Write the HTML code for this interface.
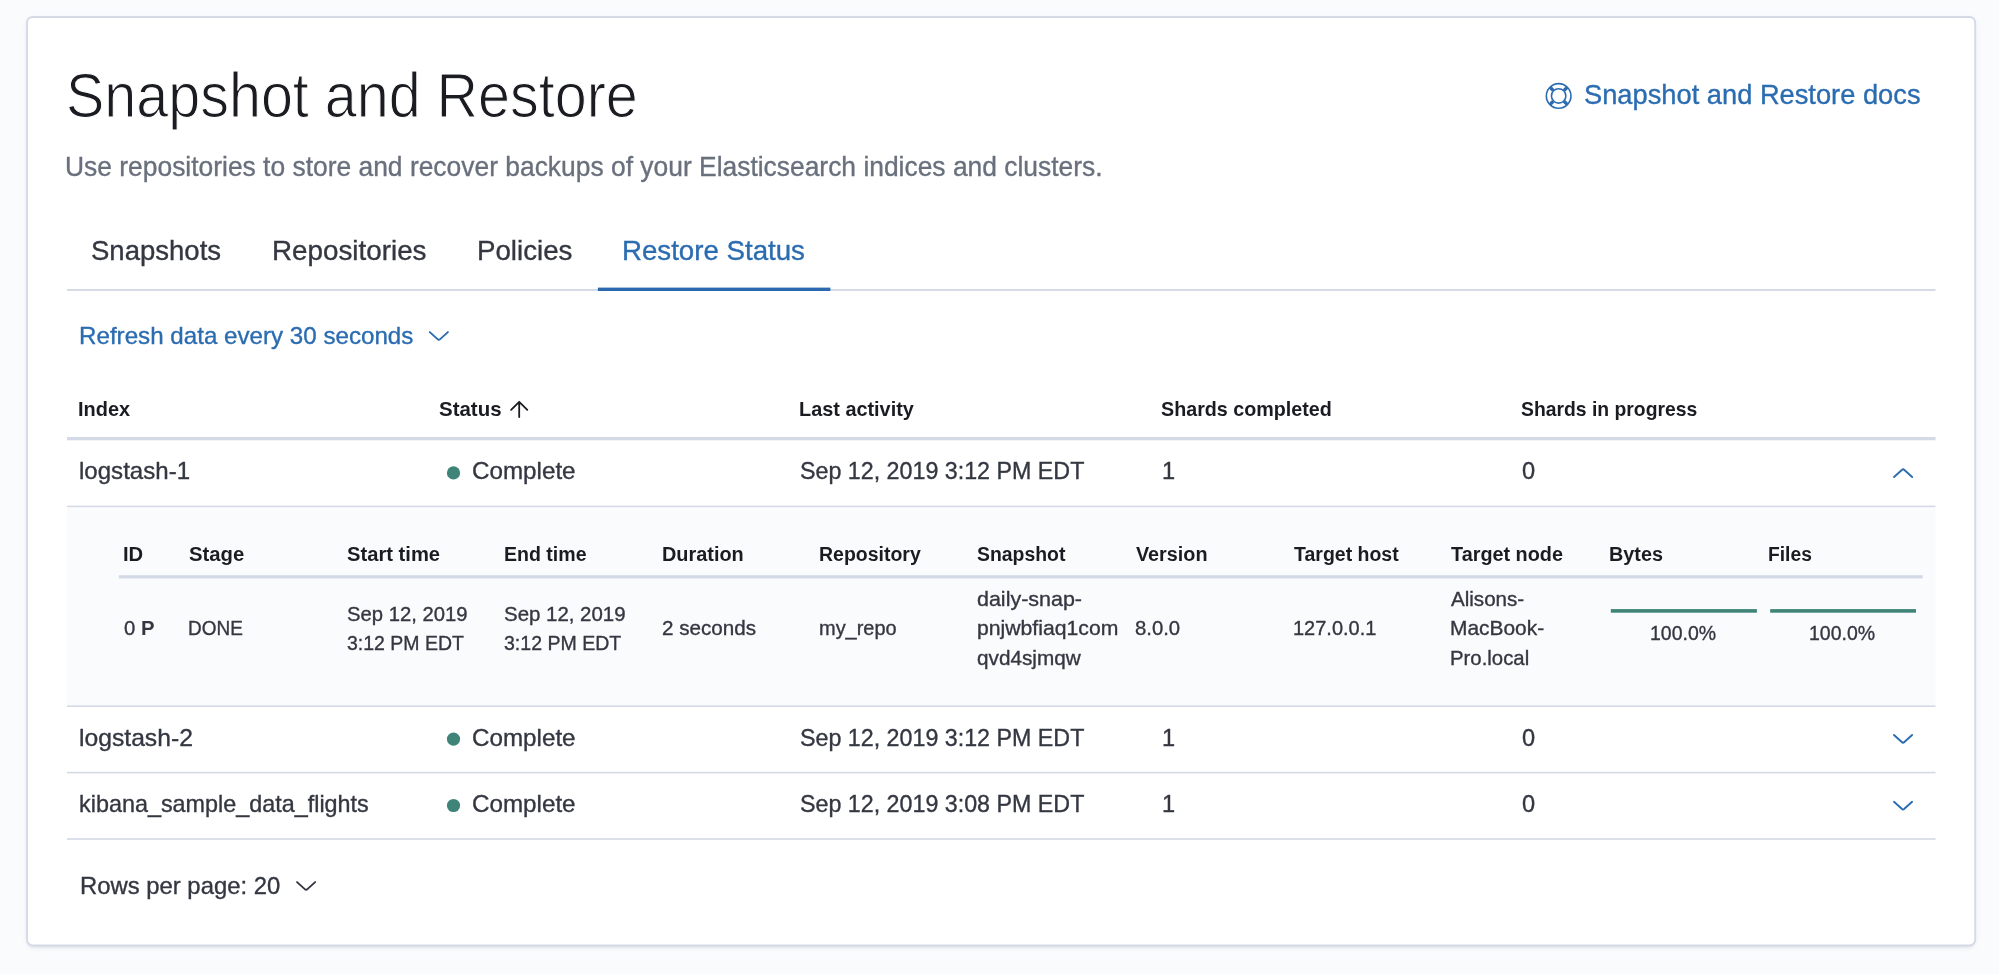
<!DOCTYPE html>
<html lang="en"><head><meta charset="utf-8"><title>Snapshot and Restore</title>
<style>
*{margin:0;padding:0;box-sizing:border-box}
html,body{width:1999px;height:974px;overflow:hidden;background:#fafbfd}
body{font-family:"Liberation Sans",sans-serif;position:relative;-webkit-font-smoothing:antialiased}
.panel{position:absolute;left:27px;top:17px;width:1948px;height:928px;background:#fff;border-radius:6px;box-shadow:0 3.2px 3.2px -1.6px rgba(152,162,179,.3),0 1.6px 8px -3.2px rgba(152,162,179,.3)}
.t{position:absolute;white-space:pre;line-height:1;transform-origin:0 0}
.layer{position:absolute;left:0;top:0;width:1999px;height:974px;will-change:transform;transform:translateZ(0)}
svg{position:absolute;overflow:visible}
.title{font-size:63.0px;font-weight:400;color:#1a1c21;-webkit-text-stroke:1.1px #fff;paint-order:fill stroke}
.sub{font-size:27.2px;font-weight:400;color:#69707d;-webkit-text-stroke:0.35px #69707d}
.tab{font-size:27.2px;font-weight:400;color:#343741;-webkit-text-stroke:0.35px #343741}
.tabsel{font-size:27.2px;font-weight:400;color:#2b6cb1;-webkit-text-stroke:0.35px #2b6cb1}
.docs{font-size:27.2px;font-weight:400;color:#2b6cb1;-webkit-text-stroke:0.35px #2b6cb1}
.btn{font-size:23.6px;font-weight:400;color:#2b6cb1;-webkit-text-stroke:0.35px #2b6cb1}
.th{font-size:19.9px;font-weight:700;color:#1a1c21}
.td{font-size:23.6px;font-weight:400;color:#343741;-webkit-text-stroke:0.35px #343741}
.ith{font-size:20.0px;font-weight:700;color:#1a1c21}
.itd{font-size:20.3px;font-weight:400;color:#343741;-webkit-text-stroke:0.35px #343741}
.itdb{font-size:20.3px;font-weight:700;color:#343741}
.rows{font-size:23.6px;font-weight:400;color:#343741;-webkit-text-stroke:0.35px #343741}
</style></head>
<body>
<div class="panel"></div>
<div class="layer">
<svg width="1999" height="974" style="left:0;top:0" viewBox="0 0 1999 974">
<rect x="27" y="16.95" width="1948.2" height="928.4" rx="5.6" fill="#fff" stroke="#d3dae6" stroke-width="1.85"/>
<rect x="67" y="507.8" width="1868.5" height="197.6" fill="#fafbfd"/>
<rect x="67" y="289.0" width="1868.5" height="1.9" fill="#d3dae6"/>
<rect x="597.9" y="287.6" width="232.5" height="3.4" fill="#2a69b0"/>
<rect x="67" y="437.0" width="1868.5" height="3.3" fill="#d3dae6"/>
<rect x="67" y="505.6" width="1868.5" height="1.6" fill="#d3dae6"/>
<rect x="67" y="705.4" width="1868.5" height="1.6" fill="#d3dae6"/>
<rect x="67" y="771.8" width="1868.5" height="1.6" fill="#d3dae6"/>
<rect x="67" y="838.2" width="1868.5" height="1.6" fill="#d3dae6"/>
<rect x="118.9" y="575.2" width="1803.8" height="3.2" fill="#d3dae6"/>
<rect x="1610.8" y="609.1" width="146.1" height="3.6" fill="#3f8478"/>
<rect x="1770.2" y="609.1" width="145.8" height="3.6" fill="#3f8478"/>
<circle cx="453.5" cy="472.9" r="6.6" fill="#3f8478"/>
<circle cx="453.5" cy="739.1" r="6.6" fill="#3f8478"/>
<circle cx="453.5" cy="805.5" r="6.6" fill="#3f8478"/>
</svg>
<span class="t title" id="title" style="left:66px;top:64px;transform:scaleX(0.9121)">Snapshot and Restore</span>
<span class="t sub" id="sub" style="left:65px;top:153px;transform:scaleX(0.9712)">Use repositories to store and recover backups of your Elasticsearch indices and clusters.</span>
<span class="t docs" id="docs" style="left:1584px;top:81px;transform:scaleX(1.0030)">Snapshot and Restore docs</span>
<span class="t tab" id="tab1" style="left:91px;top:237px;transform:scaleX(1.0121)">Snapshots</span>
<span class="t tab" id="tab2" style="left:272px;top:237px;transform:scaleX(1.0224)">Repositories</span>
<span class="t tab" id="tab3" style="left:477px;top:237px;transform:scaleX(1.0181)">Policies</span>
<span class="t tabsel" id="tab4" style="left:622px;top:237px;transform:scaleX(1.0171)">Restore Status</span>
<span class="t btn" id="refresh" style="left:79px;top:325px;transform:scaleX(1.0239)">Refresh data every 30 seconds</span>
<span class="t th" id="h1" style="left:78px;top:400px;transform:scaleX(1.0022)">Index</span>
<span class="t th" id="h2" style="left:439px;top:400px;transform:scaleX(1.0285)">Status</span>
<span class="t th" id="h3" style="left:799px;top:400px;transform:scaleX(0.9990)">Last activity</span>
<span class="t th" id="h4" style="left:1161px;top:400px;transform:scaleX(0.9909)">Shards completed</span>
<span class="t th" id="h5" style="left:1521px;top:400px;transform:scaleX(0.9726)">Shards in progress</span>
<span class="t td" id="r0a" style="left:79px;top:460px;transform:scaleX(1.0199)">logstash-1</span>
<span class="t td" id="r0b" style="left:472px;top:460px;transform:scaleX(1.0258)">Complete</span>
<span class="t td" id="r0c" style="left:800px;top:460px;transform:scaleX(0.9855)">Sep 12, 2019 3:12 PM EDT</span>
<span class="t td" id="r0d" style="left:1162px;top:460px;transform:scaleX(1.0000)">1</span>
<span class="t td" id="r0e" style="left:1522px;top:460px;transform:scaleX(1.0000)">0</span>
<span class="t td" id="r1a" style="left:79px;top:727px;transform:scaleX(1.0462)">logstash-2</span>
<span class="t td" id="r1b" style="left:472px;top:727px;transform:scaleX(1.0258)">Complete</span>
<span class="t td" id="r1c" style="left:800px;top:727px;transform:scaleX(0.9855)">Sep 12, 2019 3:12 PM EDT</span>
<span class="t td" id="r1d" style="left:1162px;top:727px;transform:scaleX(1.0000)">1</span>
<span class="t td" id="r1e" style="left:1522px;top:727px;transform:scaleX(1.0000)">0</span>
<span class="t td" id="r2a" style="left:79px;top:793px;transform:scaleX(0.9907)">kibana_sample_data_flights</span>
<span class="t td" id="r2b" style="left:472px;top:793px;transform:scaleX(1.0258)">Complete</span>
<span class="t td" id="r2c" style="left:800px;top:793px;transform:scaleX(0.9855)">Sep 12, 2019 3:08 PM EDT</span>
<span class="t td" id="r2d" style="left:1162px;top:793px;transform:scaleX(1.0000)">1</span>
<span class="t td" id="r2e" style="left:1522px;top:793px;transform:scaleX(1.0000)">0</span>
<span class="t ith" id="i1" style="left:123px;top:544px;transform:scaleX(1.0094)">ID</span>
<span class="t ith" id="i2" style="left:189px;top:544px;transform:scaleX(1.0137)">Stage</span>
<span class="t ith" id="i3" style="left:347px;top:544px;transform:scaleX(1.0088)">Start time</span>
<span class="t ith" id="i4" style="left:504px;top:544px;transform:scaleX(0.9772)">End time</span>
<span class="t ith" id="i5" style="left:662px;top:544px;transform:scaleX(0.9945)">Duration</span>
<span class="t ith" id="i6" style="left:819px;top:544px;transform:scaleX(0.9738)">Repository</span>
<span class="t ith" id="i7" style="left:977px;top:544px;transform:scaleX(0.9703)">Snapshot</span>
<span class="t ith" id="i8" style="left:1136px;top:544px;transform:scaleX(0.9898)">Version</span>
<span class="t ith" id="i9" style="left:1294px;top:544px;transform:scaleX(0.9746)">Target host</span>
<span class="t ith" id="i10" style="left:1451px;top:544px;transform:scaleX(0.9912)">Target node</span>
<span class="t ith" id="i11" style="left:1609px;top:544px;transform:scaleX(0.9914)">Bytes</span>
<span class="t ith" id="i12" style="left:1768px;top:544px;transform:scaleX(0.9629)">Files</span>
<span class="t itd" id="c1a" style="left:124px;top:618px;transform:scaleX(1.0000)">0</span>
<span class="t itdb" id="c1b" style="left:141px;top:618px;transform:scaleX(1.0000)">P</span>
<span class="t itd" id="c2" style="left:188px;top:618px;transform:scaleX(0.9358)">DONE</span>
<span class="t itd" id="c3a" style="left:347px;top:604px;transform:scaleX(0.9980)">Sep 12, 2019</span>
<span class="t itd" id="c3b" style="left:347px;top:633px;transform:scaleX(0.9611)">3:12 PM EDT</span>
<span class="t itd" id="c4a" style="left:504px;top:604px;transform:scaleX(1.0074)">Sep 12, 2019</span>
<span class="t itd" id="c4b" style="left:504px;top:633px;transform:scaleX(0.9632)">3:12 PM EDT</span>
<span class="t itd" id="c5" style="left:662px;top:618px;transform:scaleX(1.0164)">2 seconds</span>
<span class="t itd" id="c6" style="left:819px;top:618px;transform:scaleX(0.9845)">my_repo</span>
<span class="t itd" id="c7a" style="left:977px;top:589px;transform:scaleX(1.0583)">daily-snap-</span>
<span class="t itd" id="c7b" style="left:977px;top:618px;transform:scaleX(1.0449)">pnjwbfiaq1com</span>
<span class="t itd" id="c7c" style="left:977px;top:648px;transform:scaleX(1.0216)">qvd4sjmqw</span>
<span class="t itd" id="c8" style="left:1135px;top:618px;transform:scaleX(1.0007)">8.0.0</span>
<span class="t itd" id="c9" style="left:1293px;top:618px;transform:scaleX(0.9850)">127.0.0.1</span>
<span class="t itd" id="c10a" style="left:1451px;top:589px;transform:scaleX(1.0143)">Alisons-</span>
<span class="t itd" id="c10b" style="left:1450px;top:618px;transform:scaleX(1.0307)">MacBook-</span>
<span class="t itd" id="c10c" style="left:1450px;top:648px;transform:scaleX(1.0034)">Pro.local</span>
<span class="t itd" id="c11" style="left:1650px;top:623px;transform:scaleX(0.9597)">100.0%</span>
<span class="t itd" id="c12" style="left:1809px;top:623px;transform:scaleX(0.9597)">100.0%</span>
<span class="t rows" id="rows" style="left:80px;top:875px;transform:scaleX(1.0110)">Rows per page: 20</span>
<svg width="1999" height="974" style="left:0;top:0" viewBox="0 0 1999 974">
<path d="M429.80 332.10L437.55 339.12Q438.85 340.45 440.15 339.12L447.90 332.10" fill="none" stroke="#2b6cb1" stroke-width="1.9" stroke-linecap="round" stroke-linejoin="round"/>
<path d="M1894.05 477.00L1901.80 469.98Q1903.10 468.65 1904.40 469.98L1912.15 477.00" fill="none" stroke="#2b6cb1" stroke-width="1.9" stroke-linecap="round" stroke-linejoin="round"/>
<path d="M1894.00 735.00L1901.75 742.02Q1903.05 743.35 1904.35 742.02L1912.10 735.00" fill="none" stroke="#2b6cb1" stroke-width="1.9" stroke-linecap="round" stroke-linejoin="round"/>
<path d="M1894.00 801.80L1901.75 808.82Q1903.05 810.15 1904.35 808.82L1912.10 801.80" fill="none" stroke="#2b6cb1" stroke-width="1.9" stroke-linecap="round" stroke-linejoin="round"/>
<path d="M297.05 882.10L304.80 889.12Q306.10 890.45 307.40 889.12L315.15 882.10" fill="none" stroke="#343741" stroke-width="1.9" stroke-linecap="round" stroke-linejoin="round"/>
<path d="M519.2 417.1V402M511.1 409.9l8.1-8.1 8.1 8.1" fill="none" stroke="#1a1c21" stroke-width="1.8" stroke-linecap="round" stroke-linejoin="round"/>
<g fill="none" stroke="#2b6cb1"><circle cx="1558.65" cy="95.9" r="12.3" stroke-width="1.6"/><circle cx="1558.65" cy="95.9" r="7.2" stroke-width="1.6"/><line x1="1564.02" y1="101.27" x2="1567.14" y2="104.39" stroke-width="3.4"/><line x1="1553.28" y1="101.27" x2="1550.16" y2="104.39" stroke-width="3.4"/><line x1="1553.28" y1="90.53" x2="1550.16" y2="87.41" stroke-width="3.4"/><line x1="1564.02" y1="90.53" x2="1567.14" y2="87.41" stroke-width="3.4"/></g>
</svg>
</div>
</body></html>
